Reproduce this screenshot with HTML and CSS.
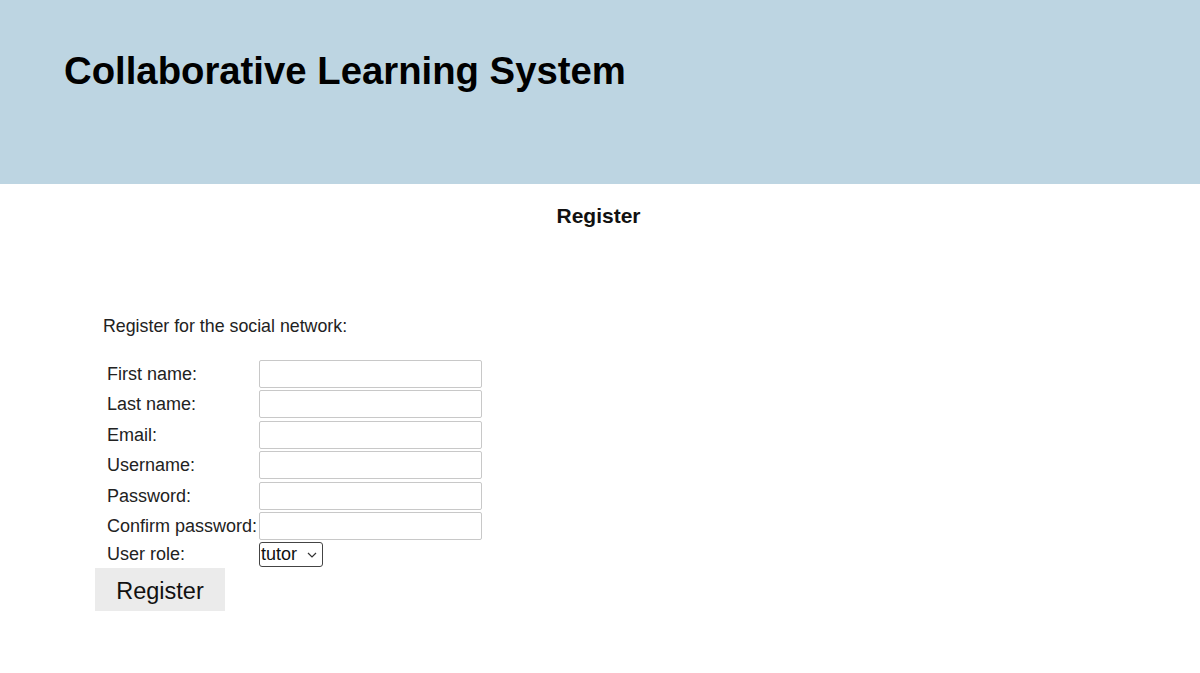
FILE: index.html
```html
<!DOCTYPE html>
<html>
<head>
<meta charset="utf-8">
<link rel="stylesheet" href="styles.css">
</head>
<body>
<header class="banner">
  <h1 class="site-title">Collaborative Learning System</h1>
</header>
<main class="content">
  <h2 class="page-title">Register</h2>
  <p class="intro">Register for the social network:</p>
  <form class="reg-form">
    <div class="fields">
      <label class="lbl">First name:</label><input class="txt" type="text">
      <label class="lbl">Last name:</label><input class="txt" type="text">
      <label class="lbl">Email:</label><input class="txt" type="text">
      <label class="lbl">Username:</label><input class="txt" type="text">
      <label class="lbl">Password:</label><input class="txt" type="password">
      <label class="lbl">Confirm password:</label><input class="txt" type="password">
      <label class="lbl lbl-last">User role:</label>
      <div class="sel-wrap">
        <div class="sel"><span>tutor</span>
          <svg class="chev" width="10" height="6" viewBox="0 0 10 6"><path d="M1 1 L5 5 L9 1" fill="none" stroke="#333" stroke-width="1.2"/></svg>
        </div>
      </div>
    </div>
    <button class="btn" type="button">Register</button>
  </form>
</main>
</body>
</html>
```

FILE: styles.css
```css
html, body {
  margin: 0;
  padding: 0;
  background: #ffffff;
  font-family: "Liberation Sans", Arial, sans-serif;
  color: #111;
}
.banner {
  background: #bdd5e2;
  height: 184px;
  box-sizing: border-box;
  padding: 48px 0 0 64px;
}
.site-title {
  margin: 0;
  font-size: 38.3px;
  font-weight: bold;
  color: #000;
  line-height: 46px;
}
.page-title {
  margin: 0;
  padding-top: 20px;
  text-align: center;
  font-size: 21px;
  font-weight: bold;
  line-height: 24px;
  color: #111;
  padding-right: 3px;
}
.intro {
  margin: 87px 0 0 103px;
  font-size: 17.8px;
  line-height: 22px;
  color: #222;
}
.reg-form {
  margin: 23px 0 0 95px;
}
.fields {
  display: grid;
  grid-template-columns: 164px 223px;
  row-gap: 2.4px;
  align-items: center;
}
.lbl {
  padding-left: 12px;
  font-size: 18px;
  line-height: 28px;
  color: #222;
  white-space: nowrap;
}
.lbl-last {
  line-height: 25px;
}
.txt {
  width: 223px;
  height: 28px;
  box-sizing: border-box;
  margin: 0;
  border: 1px solid #c8c8c8;
  border-radius: 2px;
  background: #fff;
  padding: 0;
}
.sel-wrap {
  display: flex;
}
.sel {
  display: flex;
  align-items: center;
  gap: 10px;
  width: 64px;
  height: 25px;
  box-sizing: border-box;
  border: 1px solid #444;
  border-radius: 3px;
  padding: 0 6px 0 1px;
  font-size: 18px;
  color: #111;
}
.chev {
  flex: none;
}
.btn {
  display: block;
  margin-top: 1px;
  width: 130px;
  height: 43px;
  border: none;
  background: #ebebeb;
  font-family: "Liberation Sans", Arial, sans-serif;
  font-size: 23.5px;
  color: #111;
  padding: 3px 0 0 0;
}
```
